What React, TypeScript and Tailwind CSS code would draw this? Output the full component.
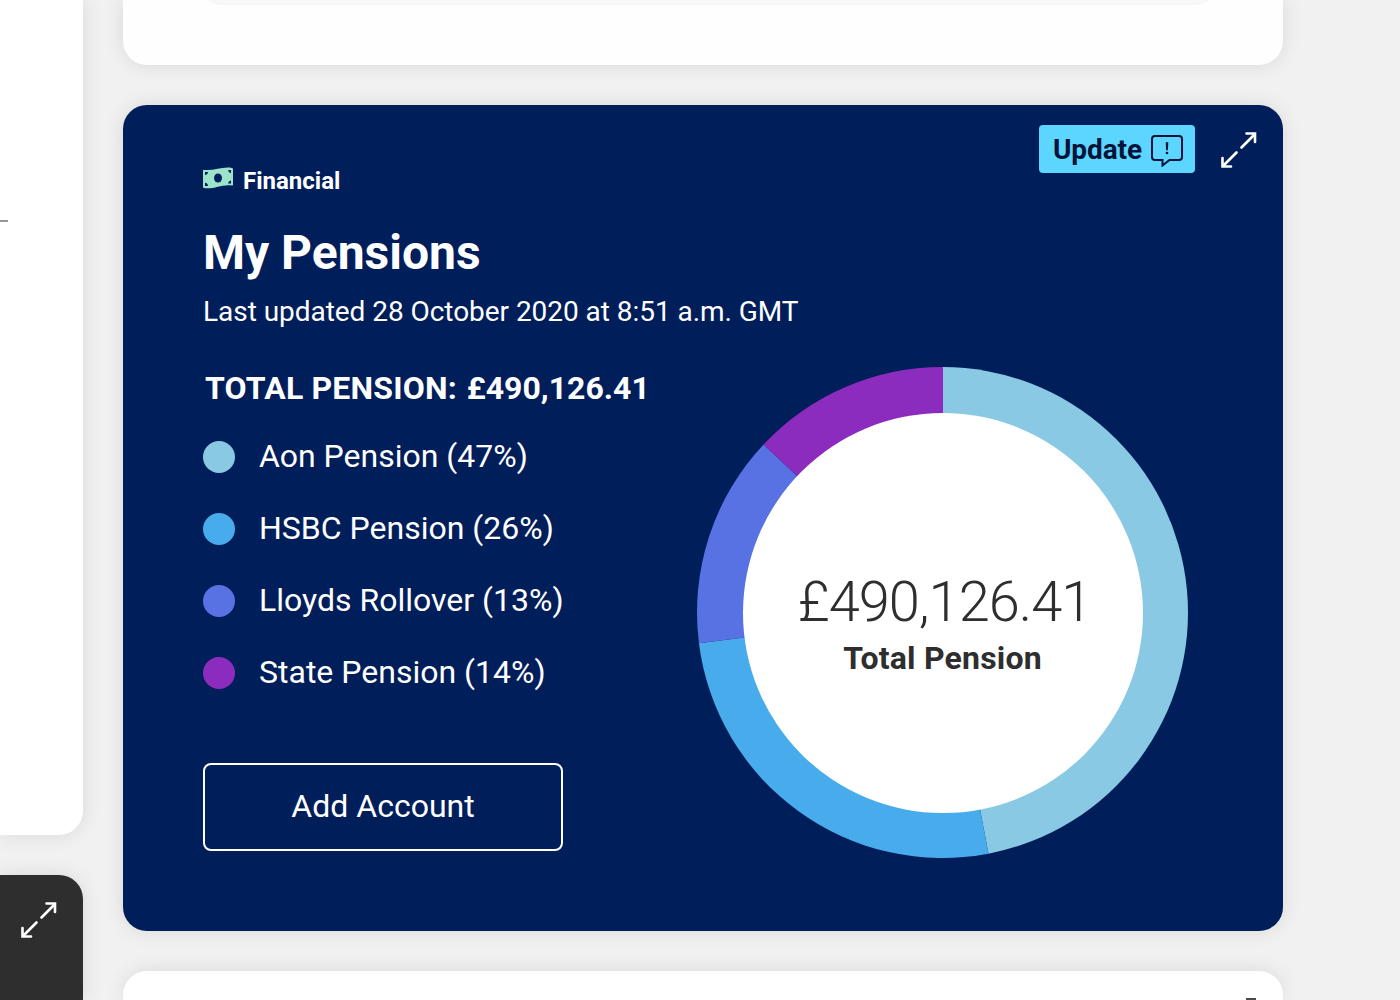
const FONT = "font-['Roboto',sans-serif]";
const SHADOW = 'shadow-[0_0_20px_rgba(0,0,0,0.1)]';

const accounts = [
  { label: 'Aon Pension (47%)', dot: 'bg-[#89c9e3]' },
  { label: 'HSBC Pension (26%)', dot: 'bg-[#48abec]' },
  { label: 'Lloyds Rollover (13%)', dot: 'bg-[#5871e3]' },
  { label: 'State Pension (14%)', dot: 'bg-[#8c2cbf]' },
];

const segments = [
  { from: 0, to: 47, color: '#89c9e3' },
  { from: 47, to: 73, color: '#48abec' },
  { from: 73, to: 87, color: '#5871e3' },
  { from: 87, to: 100, color: '#8c2cbf' },
];

function point(percent: number, radius: number) {
  const angle = (percent / 100) * Math.PI * 2;
  return `${(245.5 + radius * Math.sin(angle)).toFixed(2)} ${(245.5 - radius * Math.cos(angle)).toFixed(2)}`;
}

function Donut() {
  return (
    <svg className="col-start-1 row-start-1" width="492" height="491" viewBox="0 0 492 491">
      {segments.map((s) => (
        <path key={s.color} fill={s.color} d={`M${point(s.from, 245.5)}A245.5 245.5 0 0 1 ${point(s.to, 245.5)}L245.5 245.5Z`} />
      ))}
      <path d="M246 0v60h-2V0Z" fill="#8c2cbf" />
      <path d="M246 0v60h2V0Z" fill="#89c9e3" />
      <circle cx="246" cy="246" r="200" fill="#fff" />
    </svg>
  );
}

function ExpandIcon() {
  return (
    <svg width="36" height="36" viewBox="0 0 36 36" fill="none" stroke="#fff" strokeWidth="2.6">
      <path d="M20.500 15.500 33.500 2.500" strokeLinecap="round" />
      <path d="M25.500 1.500h8.500v8.500" strokeLinecap="round" />
      <path d="M15.500 20.500 2.500 33.500" strokeLinecap="round" />
      <path d="M1.500 26v8.500H10" strokeLinecap="round" />
    </svg>
  );
}

function MoneyIcon() {
  return (
    <svg className="mb-1.5" width="30" height="22" viewBox="0 0 30 22">
      <path d="M0 3.500Q0 2.700 1 2.900C11 4.200 19-.8 29 .9Q30 1.100 30 2v15.800Q30 18.700 29 18.500C19 16.800 11 22.600 1 21.100Q0 21 0 20Z" fill="#9be3c9" />
      <ellipse cx="15" cy="11" rx="4" ry="4.600" fill="#001e5a" />
      <path d="M2 5h3q-.2 2.700-3 3ZM28 3v3.200q-2.700-.4-3-3ZM2 15.800q2.800.3 3 3.200H2ZM28 13.400v3.200l-3-.2q.3-2.700 3-3Z" fill="#001e5a" />
    </svg>
  );
}

function AlertBubble() {
  return (
    <svg className="mt-1" width="32" height="32" viewBox="0 0 32 32" fill="none" stroke="#00133a" strokeWidth="2">
      <path d="M4 1h24a3 3 0 0 1 3 3v18a3 3 0 0 1-3 3H18.500l-7 5.500V25H4a3 3 0 0 1-3-3V4a3 3 0 0 1 3-3Z" />
      <path d="M14.700 7.200h2.600l-.4 8h-1.800Z" fill="#00133a" stroke="none" />
      <circle cx="16" cy="18" r="1.300" fill="#00133a" stroke="none" />
    </svg>
  );
}

function PensionCard() {
  return (
    <section className={`relative h-[826px] shrink-0 rounded-3xl bg-[#001e5a] px-20 text-white ${SHADOW}`}>
      <div className="absolute top-5 right-[26px] flex items-center gap-[26px]">
        <button className="flex h-12 w-39 items-center justify-between rounded bg-[#5cd6ff] pr-3 pl-3.5 text-[28px] font-bold text-[#00133a]">
          <span className="pt-0.5 tracking-[-0.1px]">Update</span>
          <AlertBubble />
        </button>
        <div className="pt-0.5">
          <ExpandIcon />
        </div>
      </div>
      <div className="flex items-center gap-2.5 pt-[61px] text-2xl leading-[30px] font-bold">
        <MoneyIcon />
        <span>Financial</span>
      </div>
      <h1 className="mt-[29px] text-[48px] leading-[56px] font-bold">My Pensions</h1>
      <p className="mt-[15px] text-[28px] leading-8 tracking-[-0.045px]">Last updated 28 October 2020 at 8:51 a.m. GMT</p>
      <div className="flex justify-between">
        <div>
          <h2 className="mt-10 pl-0.5 text-[32px] leading-10 font-bold tracking-[0.2px]">
            TOTAL PENSION: <span className="pl-[1.5px] tracking-[0px]">£490,126.41</span>
          </h2>
          <ul className="mt-7 flex flex-col gap-8">
            {accounts.map((a) => (
              <li key={a.label} className="flex h-10 items-center gap-6 text-[32px] leading-10">
                <span className={`mt-0.5 size-8 rounded-full ${a.dot}`} />
                {a.label}
              </li>
            ))}
          </ul>
          <button className="mt-[71px] h-22 w-90 rounded-lg border-2 border-white pb-0.5 text-[32px]">Add Account</button>
        </div>
        <div className="mt-[39px] mr-[14px] grid">
          <Donut />
          <div className="col-start-1 row-start-1 flex flex-col items-center pt-[201px] text-[#2e2e2e]">
            <span className="pl-[3px] font-['Roboto_Slab','Roboto',serif] text-[56px] leading-[68px] font-light tracking-[-1px]">£490,126.41</span>
            <span className="mt-0.5 pr-px text-[32px] leading-10 font-bold tracking-[0.2px]">Total Pension</span>
          </div>
        </div>
      </div>
    </section>
  );
}

export default function App() {
  return (
    <div className={`flex h-[1000px] w-[1400px] gap-10 overflow-hidden bg-[#f1f1f1] ${FONT}`}>
      <div className="flex w-[83px] flex-col gap-10">
        <div className={`h-[835px] shrink-0 rounded-br-3xl bg-white pt-[220px] ${SHADOW}`}>
          <div className="h-0.5 w-2 bg-[#979797]" />
        </div>
        <div className={`flex flex-1 justify-end rounded-tr-3xl bg-[#2e2e2e] pt-[27px] pr-[26px] ${SHADOW}`}>
          <ExpandIcon />
        </div>
      </div>
      <div className="flex w-[1160px] flex-col gap-10">
        <div className={`h-[65px] shrink-0 rounded-b-3xl bg-[#fefefe] pr-[64px] pl-[75px] ${SHADOW}`}>
          <div className="h-[5px] overflow-hidden">
            <div className="-mt-[43px] h-12 rounded-3xl bg-[#f8f8f8]" />
          </div>
        </div>
        <PensionCard />
        <div className={`flex flex-1 items-end justify-end rounded-t-3xl bg-white pr-[27px] ${SHADOW}`}>
          <div className="h-0.5 w-2.5 bg-[#4a4a4a]" />
        </div>
      </div>
    </div>
  );
}
